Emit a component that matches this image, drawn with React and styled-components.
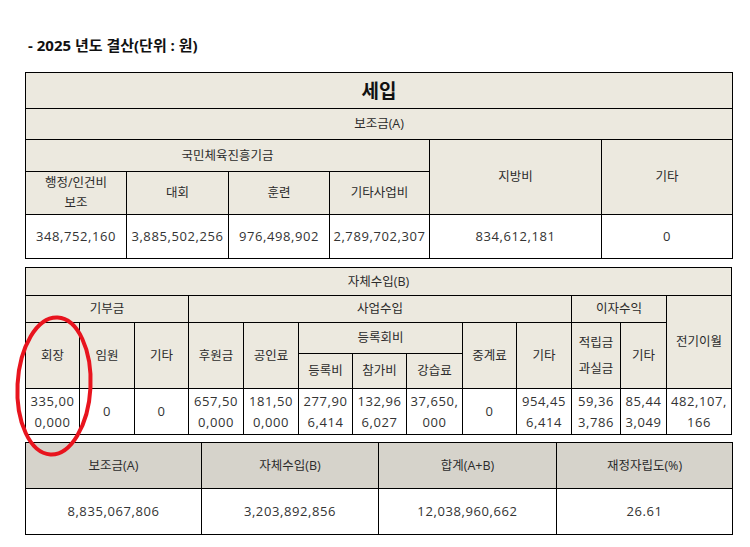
import React from "react";
import styled, { createGlobalStyle } from "styled-components";

const GlobalStyle = createGlobalStyle`
  body {
    margin: 0;
    background: #fff;
    font-family: "Open Sans", "Noto Sans CJK KR", sans-serif;
    color: #333;
  }
`;

const subsidy = [
  ["348,752,160", "3,885,502,256", "976,498,902", "2,789,702,307", "834,612,181", "0"],
];

const ownValues = [
  "335,000,000",
  "0",
  "0",
  "657,500,000",
  "181,500,000",
  "277,906,414",
  "132,966,027",
  "37,650,000",
  "0",
  "954,456,414",
  "59,363,786",
  "85,443,049",
  "482,107,166",
];

const summary = [
  { label: "보조금(A)", value: "8,835,067,806" },
  { label: "자체수입(B)", value: "3,203,892,856" },
  { label: "합계(A+B)", value: "12,038,960,662" },
  { label: "재정자립도(%)", value: "26.61" },
];

const App = () => {
  return (
    <Page>
      <GlobalStyle />
      <Title>- 2025 년도 결산(단위 : 원)</Title>

      <Table $gap={8}>
        <colgroup>
          {[101, 102, 101, 100, 172, 131].map((w, i) => (
            <col key={i} style={{ width: w }} />
          ))}
        </colgroup>
        <tbody>
          <Row $h={36}>
            <Head colSpan={6} $big>
              세입
            </Head>
          </Row>
          <Row $h={31}>
            <Head colSpan={6}>보조금(A)</Head>
          </Row>
          <Row $h={32}>
            <Head colSpan={4}>국민체육진흥기금</Head>
            <Head rowSpan={2}>지방비</Head>
            <Head rowSpan={2}>기타</Head>
          </Row>
          <Row $h={43}>
            <Head>
              행정/인건비
              <br />
              보조
            </Head>
            <Head>대회</Head>
            <Head>훈련</Head>
            <Head>기타사업비</Head>
          </Row>
          {subsidy.map((row, r) => (
            <Row $h={44} key={r}>
              {row.map((v, i) => (
                <Cell key={i}>{v}</Cell>
              ))}
            </Row>
          ))}
        </tbody>
      </Table>

      <Table $gap={7}>
        <colgroup>
          {[54, 55, 54, 55, 55, 54, 54, 56, 54, 55, 49, 46, 65].map((w, i) => (
            <col key={i} style={{ width: w }} />
          ))}
        </colgroup>
        <tbody>
          <Row $h={28}>
            <Head colSpan={13}>자체수입(B)</Head>
          </Row>
          <Row $h={27}>
            <Head colSpan={3}>기부금</Head>
            <Head colSpan={7}>사업수입</Head>
            <Head colSpan={2}>이자수익</Head>
            <Head rowSpan={3}>전기이월</Head>
          </Row>
          <Row $h={31}>
            <Head rowSpan={2}>회장</Head>
            <Head rowSpan={2}>임원</Head>
            <Head rowSpan={2}>기타</Head>
            <Head rowSpan={2}>후원금</Head>
            <Head rowSpan={2}>공인료</Head>
            <Head colSpan={3}>등록회비</Head>
            <Head rowSpan={2}>중계료</Head>
            <Head rowSpan={2}>기타</Head>
            <Head rowSpan={2} $lh={26}>
              적립금
              <br />
              과실금
            </Head>
            <Head rowSpan={2}>기타</Head>
          </Row>
          <Row $h={35}>
            <Head>등록비</Head>
            <Head>참가비</Head>
            <Head>강습료</Head>
          </Row>
          <Row $h={46}>
            {ownValues.map((v, i) => (
              <Cell key={i} $wrap>
                {v}
              </Cell>
            ))}
          </Row>
        </tbody>
      </Table>

      <Table>
        <colgroup>
          {[176, 177, 178, 176].map((w, i) => (
            <col key={i} style={{ width: w }} />
          ))}
        </colgroup>
        <tbody>
          <Row $h={46}>
            {summary.map((s) => (
              <Head key={s.label} $gray>
                {s.label}
              </Head>
            ))}
          </Row>
          <Row $h={46}>
            {summary.map((s) => (
              <Cell key={s.label}>{s.value}</Cell>
            ))}
          </Row>
        </tbody>
      </Table>

      <Mark viewBox="0 0 84 148" aria-hidden="true">
        <ellipse
          cx="42"
          cy="74"
          rx="36.5"
          ry="68.5"
          transform="rotate(3 42 74)"
          fill="none"
          stroke="#e8141e"
          strokeWidth="4"
        />
      </Mark>
    </Page>
  );
};

export default App;

const Page = styled.div`
  position: relative;
  width: 750px;
  min-height: 547px;
  box-sizing: border-box;
  padding: 33px 0 0 25px;
`;

const Title = styled.h2`
  margin: 0 0 15px 3px;
  font-size: 15px;
  line-height: 24px;
  font-weight: 700;
  color: #111;
`;

const Table = styled.table`
  width: 707px;
  table-layout: fixed;
  border-collapse: collapse;
  margin-bottom: ${(p) => p.$gap || 0}px;
`;

const Row = styled.tr`
  height: ${(p) => p.$h}px;
`;

const Head = styled.th`
  background: ${(p) => (p.$gray ? "#d6d3cb" : "#ece9df")};
  border: 1px solid #000;
  padding: 0 3px;
  text-align: center;
  vertical-align: middle;
  font-size: ${(p) => (p.$big ? "19px" : "12.5px")};
  font-weight: ${(p) => (p.$big ? 700 : 400)};
  color: ${(p) => (p.$big ? "#111" : "#2b2b2b")};
  line-height: ${(p) => p.$lh || 20}px;
`;

const Cell = styled.td`
  background: #fff;
  border: 1px solid #000;
  padding: 0 3px;
  text-align: center;
  vertical-align: middle;
  font-size: 13px;
  letter-spacing: 0.6px;
  line-height: 21px;
  color: #333;
  word-break: ${(p) => (p.$wrap ? "break-all" : "normal")};
`;

const Mark = styled.svg`
  position: absolute;
  left: 12px;
  top: 312px;
  width: 84px;
  height: 148px;
  overflow: visible;
  pointer-events: none;
`;
